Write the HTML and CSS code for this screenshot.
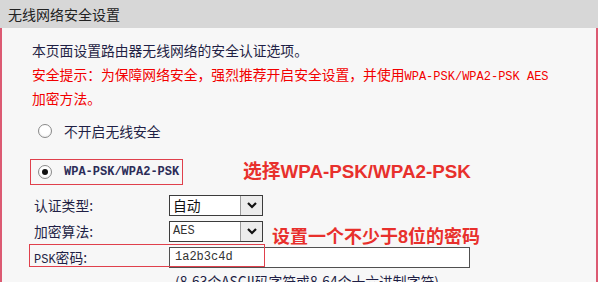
FILE: index.html
```html
<!DOCTYPE html>
<html lang="zh-CN">
<head>
    <meta charset="UTF-8">
    <meta name="viewport" content="width=device-width, initial-scale=1.0">
    <title>无线网络安全设置</title>
    <link rel="stylesheet" href="styles.css">
</head>
<body>
    <div class="panel">
        <div class="panel-title">无线网络安全设置</div>

        <div class="panel-body">
            <p class="intro">本页面设置路由器无线网络的安全认证选项。</p>
            <p class="warn">安全提示：为保障网络安全，强烈推荐开启安全设置，并使用<span class="mono">WPA-PSK/WPA2-PSK AES</span><br>加密方法。</p>

            <div class="option">
                <span class="radio"></span>
                <span>不开启无线安全</span>
            </div>

            <div class="option picked">
                <span class="radio checked"></span>
                <span class="mono">WPA-PSK/WPA2-PSK</span>
            </div>

            <div class="form">
                <div class="row">
                    <label>认证类型:</label>
                    <div class="select">
                        <span class="select-value">自动</span>
                        <span class="select-btn">
                            <svg width="12" height="8" viewBox="0 0 12 8"><polyline points="2,2 6,6 10,2" fill="none" stroke="#111" stroke-width="2.2"/></svg>
                        </span>
                    </div>
                </div>
                <div class="row">
                    <label>加密算法:</label>
                    <div class="select">
                        <span class="select-value mono">AES</span>
                        <span class="select-btn">
                            <svg width="12" height="8" viewBox="0 0 12 8"><polyline points="2,2 6,6 10,2" fill="none" stroke="#111" stroke-width="2.2"/></svg>
                        </span>
                    </div>
                </div>
                <div class="row psk-row">
                    <span class="mark"></span>
                    <label><span class="mono">PSK</span>密码:</label>
                    <div class="text-input mono">1a2b3c4d</div>
                </div>
                <p class="hint">(8-63个ASCII码字符或8-64个十六进制字符)</p>
            </div>
        </div>

        <div class="callout callout-wpa">选择WPA-PSK/WPA2-PSK</div>
        <div class="callout callout-psk">设置一个不少于8位的密码</div>
    </div>
</body>
</html>
```

FILE: styles.css
```css
body {
    margin: 0;
    background: #fff;
    font-family: "Noto Sans CJK SC", sans-serif;
    color: #1f1f45;
    overflow: hidden;
}

.panel {
    position: relative;
    width: 598px;
}

.panel-title {
    height: 28px;
    line-height: 28px;
    padding-left: 8px;
    background: #d7d7d7;
    font-size: 14px;
    color: #222;
}

.panel-body {
    height: 254px;
    box-sizing: border-box;
    padding: 10px 0 0 30px;
    background: #f7f7f7;
    border-left: 2px solid #dc5a72;
    border-right: 2px solid #dc5a72;
}

.mono {
    font-family: "Liberation Mono", monospace;
    font-size: 12px;
    line-height: 1;
}

.intro, .warn {
    margin: 0;
    font-size: 13.8px;
    line-height: 24px;
}

.warn {
    color: #f20000;
}

.option {
    display: flex;
    align-items: center;
    gap: 12px;
    height: 24px;
    margin-top: 9px;
    padding-left: 6px;
    font-size: 13.8px;
}

.option .radio {
    width: 14px;
    height: 14px;
}

.option.picked {
    width: 153px;
    height: 26px;
    box-sizing: border-box;
    margin: 16px 0 0 -2px;
    padding-left: 7px;
    border: 1px solid #e0404c;
}

.option.picked .mono {
    color: #2c2c58;
    font-weight: bold;
}

.radio {
    box-sizing: border-box;
    border: 1px solid #8a8a8a;
    border-radius: 50%;
    background: radial-gradient(circle at 50% 40%, #fff 50%, #e4e4e4);
    display: flex;
    align-items: center;
    justify-content: center;
}

.radio.checked::after {
    content: "";
    width: 6px;
    height: 6px;
    border-radius: 50%;
    background: #111;
}

.form {
    margin-top: 9px;
    display: flex;
    flex-direction: column;
    gap: 4px;
}

.row {
    position: relative;
    display: flex;
    align-items: center;
    height: 22px;
    font-size: 13.8px;
}

.row label {
    width: 135px;
    padding-left: 2px;
}

.select {
    display: flex;
    width: 94px;
    height: 21px;
    box-sizing: border-box;
    border: 1px solid #3c3c3c;
    background: #fff;
}

.select-value {
    flex: 1;
    padding-left: 3px;
    line-height: 19px;
    color: #111;
}

.select-value.mono {
    color: #333;
    line-height: 19px;
}

.select-btn {
    width: 21px;
    display: flex;
    align-items: center;
    justify-content: center;
    background: #ececec;
    border-left: 1px solid #9a9a9a;
}

.text-input {
    width: 301px;
    height: 21px;
    box-sizing: border-box;
    padding-left: 5px;
    border: 1px solid #505050;
    background: #fff;
    color: #333;
}

.text-input.mono {
    line-height: 19px;
}

.mark {
    position: absolute;
    left: -3px;
    top: -2px;
    width: 236px;
    height: 23px;
    border: 1px solid #e0404c;
    box-sizing: border-box;
    pointer-events: none;
}

.hint {
    margin: 0 0 0 143px;
    font-size: 13.8px;
    line-height: 18px;
    white-space: nowrap;
}

.callout {
    position: absolute;
    font-family: "Liberation Sans", "Noto Sans CJK SC", sans-serif;
    font-weight: bold;
    font-size: 18px;
    line-height: 26px;
    color: #e8302c;
    white-space: nowrap;
}

.callout-wpa {
    left: 243px;
    top: 159px;
    font-size: 18.8px;
}

.callout-psk {
    left: 272px;
    top: 224px;
}
```
